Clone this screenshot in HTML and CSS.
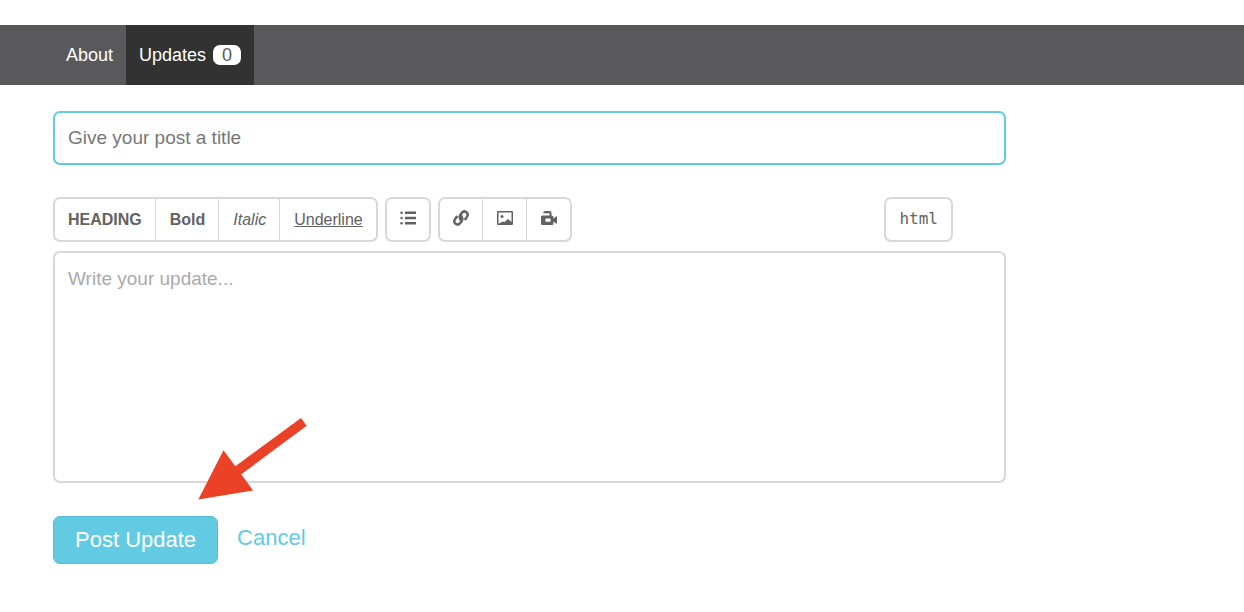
FILE: index.html
```html
<!DOCTYPE html>
<html lang="en">
<head>
<meta charset="utf-8">
<meta name="viewport" content="width=device-width, initial-scale=1">
<title>Post an update</title>
<link rel="stylesheet" href="styles.css">
</head>
<body>
<nav class="tabs">
  <a class="tab" href="#about">About</a>
  <a class="tab tab-active" href="#updates">Updates <span class="badge">0</span></a>
</nav>
<main class="page">
  <form class="post-form">
    <input class="field title-field" type="text" aria-label="Post title" placeholder="Give your post a title">
    <div class="toolbar" role="toolbar" aria-label="Formatting">
      <div class="group">
        <button class="tool strong" type="button">HEADING</button>
        <button class="tool strong" type="button">Bold</button>
        <button class="tool italic" type="button">Italic</button>
        <button class="tool underline" type="button">Underline</button>
      </div>
      <div class="group">
        <button class="tool" type="button" aria-label="List">
          <svg class="icon" viewBox="0 0 16 16"><path d="M5 1.500h11v2.600H5zM5 6.700h11v2.600H5zM5 11.900h11v2.600H5z"/><circle cx="1.600" cy="2.800" r="1.300"/><circle cx="1.600" cy="8" r="1.300"/><circle cx="1.600" cy="13.200" r="1.300"/></svg>
        </button>
      </div>
      <div class="group">
        <button class="tool" type="button" aria-label="Link">
          <svg class="icon link-icon" viewBox="0 0 16 16"><path d="M9.300 11C6.600 9.800 6 7 7.500 4.700L8.700 3C10 1.300 12 1.200 13.400 2.200C14.900 3.300 15 5.200 13.900 6.900L11.700 10M6.700 5C9.400 6.200 10 9 8.500 11.300L7.300 13C6 14.700 4 14.800 2.600 13.800C1.100 12.700 1 10.800 2.100 9.100L4.300 6"/></svg>
        </button>
        <button class="tool" type="button" aria-label="Image">
          <svg class="icon" viewBox="0 0 16 16"><path fill-rule="evenodd" d="M1 1h14q1 0 1 1v12q0 1-1 1H1q-1 0-1-1V2q0-1 1-1zM1.500 2.500v11.200L4 12.500 5.500 11.500 7.500 12 11 9l3.500 3V2.500z"/><circle cx="5" cy="6.500" r="1.500"/></svg>
        </button>
        <button class="tool" type="button" aria-label="Video">
          <svg class="icon" viewBox="0 0 16 16"><path fill-rule="evenodd" d="M2 3.200Q2.300 1 4.500 1H8.500Q10.500 1 10.500 3V5.500Q12.500 5.500 12.500 7.500V8.700L15 6.500H16V13.500H15L12.500 11.500V13.500Q12.500 15 11 15H1.500Q0 15 0 13.500V7Q0 5.500 1.500 5.500H8.500V3.200zM4.500 8.500V11.700H9.500V8.500z"/></svg>
        </button>
      </div>
      <div class="group source">
        <button class="tool mono" type="button">html</button>
      </div>
    </div>
    <div class="editor">
      <textarea class="field body-field" aria-label="Update text" placeholder="Write your update..."></textarea>
      <svg class="pointer" viewBox="0 0 110 84" aria-hidden="true"><path d="M.3 82.500 25.500 33.300 37.300 49.300 103 1 108.700 8.700 43.300 57.300 55 73.500z"/></svg>
    </div>
    <div class="actions">
      <button class="submit" type="submit">Post Update</button>
      <a class="cancel" href="#updates">Cancel</a>
    </div>
  </form>
</main>
</body>
</html>
```
FILE: styles.css
```css
* {
  box-sizing: border-box;
}

body {
  margin: 0;
  padding-top: 25px;
  background: #fff;
  color: #626262;
  font-family: "Liberation Sans", Arial, sans-serif;
}

.tabs {
  display: flex;
  height: 60px;
  padding-left: 53px;
  background: #59595b;
}

.tab {
  display: flex;
  align-items: center;
  gap: 7px;
  padding: 0 13px;
  color: #fff;
  font-size: 18px;
  text-decoration: none;
}

.tab-active {
  background: #323232;
}

.badge {
  min-width: 28px;
  border-radius: 7px;
  background: #fff;
  color: #59595b;
  line-height: 20px;
  text-align: center;
}

.page {
  padding: 26px 53px;
}

.post-form {
  max-width: 953px;
}

.field {
  display: block;
  width: 100%;
  border: 2px solid #d8d8d8;
  border-radius: 7px;
  background: #fff;
  color: #444;
  font: 19px/24px "Liberation Sans", Arial, sans-serif;
  outline: 0;
}

.title-field {
  height: 54px;
  padding: 0 13px;
  border-color: #62cae3;
}

.title-field::placeholder {
  color: #777;
}

.toolbar {
  display: flex;
  gap: 7px;
  margin: 32px 0 9px;
  padding-right: 53px;
}

.group {
  display: flex;
  height: 45px;
  border: 2px solid #d8d8d8;
  border-radius: 7px;
}

.source {
  margin-left: auto;
}

.tool {
  display: flex;
  align-items: center;
  padding: 0 13px;
  border: 0;
  background: none;
  color: inherit;
  font: 16px/20px "Liberation Sans", Arial, sans-serif;
}

.tool + .tool {
  padding-left: 14px;
  border-left: 1px solid #d8d8d8;
}

.strong {
  font-weight: bold;
}

.italic {
  font-style: italic;
}

.underline {
  text-decoration: underline;
}

.mono {
  padding-bottom: 2px;
  font-family: "DejaVu Sans Mono", monospace;
}

.icon {
  width: 16px;
  height: 16px;
  margin-bottom: 3px;
  fill: #626262;
}

.link-icon {
  fill: none;
  stroke: #626262;
  stroke-width: 2.5;
}

.editor {
  position: relative;
}

.body-field {
  height: 232px;
  padding: 14px 13px;
  resize: none;
}

.body-field::placeholder {
  color: #aaa;
}

.pointer {
  position: absolute;
  left: 145px;
  bottom: -18px;
  width: 110px;
  height: 84px;
  fill: #eb4126;
  pointer-events: none;
}

.actions {
  display: flex;
  align-items: flex-start;
  gap: 19px;
  margin-top: 33px;
  font-size: 22px;
}

.submit {
  height: 48px;
  padding: 0 21px;
  border: 1px solid #55bdd5;
  border-radius: 7px;
  background: #62cae3;
  color: #fff;
  font: inherit;
}

.cancel {
  color: #62cae3;
  line-height: 44px;
  text-decoration: none;
}
```
